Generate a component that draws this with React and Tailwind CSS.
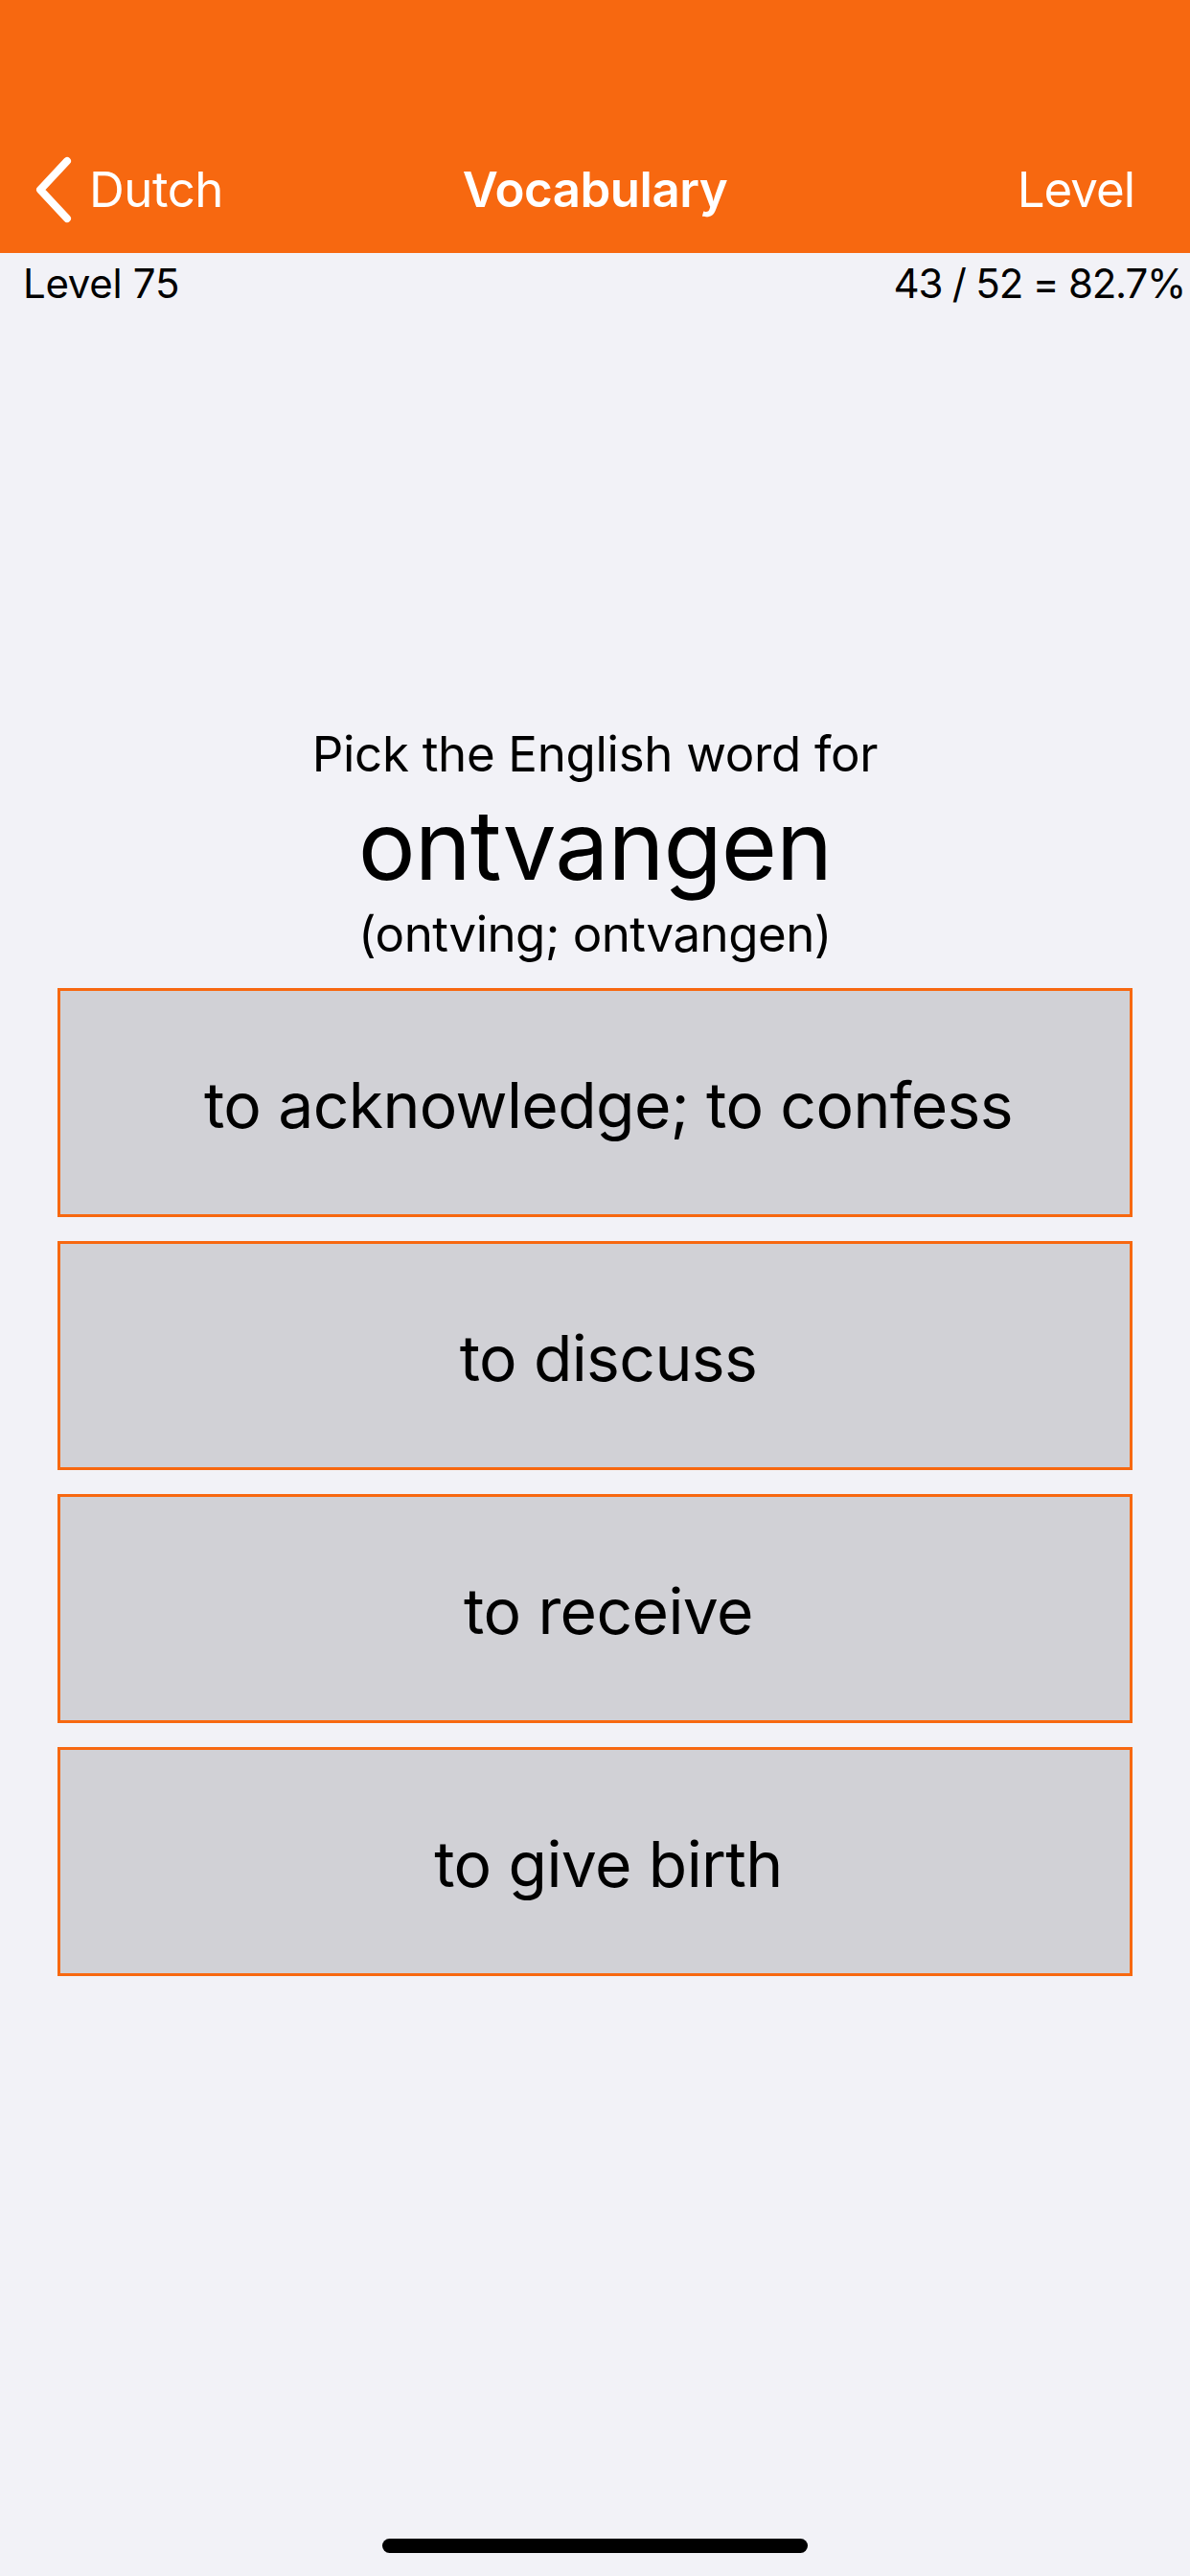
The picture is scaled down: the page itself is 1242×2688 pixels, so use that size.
const choices = [
  'to acknowledge; to confess',
  'to discuss',
  'to receive',
  'to give birth',
]

function Chevron() {
  return (
    <svg width="44" height="70" viewBox="0 0 44 70" fill="none">
      <path d="M36 5 L8 35 L36 65" stroke="white" strokeWidth="8" strokeLinecap="round" strokeLinejoin="round" />
    </svg>
  )
}

export default function App() {
  return (
    <div className="min-h-[2688px] w-[1242px] bg-[#f2f2f7] flex flex-col font-['Inter',sans-serif] text-black">
      <header className="bg-[#f76810] h-[264px] pt-[132px] text-white">
        <div className="h-[132px] grid grid-cols-3 items-center">
          <div className="flex items-center pl-[34px]">
            <Chevron />
            <span className="text-[51px] ml-[15px] tracking-[-0.5px]">Dutch</span>
          </div>
          <div className="text-center text-[51px] font-semibold tracking-[-0.5px]">Vocabulary</div>
          <div className="text-right text-[51px] pr-[58px] tracking-[-1px]">Level</div>
        </div>
      </header>

      <div className="h-[62px] flex items-center justify-between pl-[24px] pr-[5px] text-[42px] tracking-[-0.3px]">
        <span>Level 75</span>
        <span className="tracking-[-1.2px]">43 / 52 = 82.7%</span>
      </div>

      <div className="mt-[431px] flex flex-col items-center text-center">
        <div className="text-[51px] leading-[60px] tracking-[-0.3px]">Pick the English word for</div>
        <div className="text-[100px] leading-[130px] tracking-[-1px]">ontvangen</div>
        <div className="text-[51px] leading-[56px] tracking-[-0.5px]">(ontving; ontvangen)</div>
      </div>

      <div className="mt-[28px] mx-[60px] flex flex-col gap-[25px]">
        {choices.map(c => (
          <button
            key={c}
            className="h-[239px] w-full border-[3px] border-[#f76810] bg-[#d1d1d6] flex items-center justify-center pl-[28px] pt-[6px] text-[66px] tracking-[-0.6px]"
          >
            {c}
          </button>
        ))}
      </div>

      <div className="mt-auto mb-[24px] mx-auto w-[444px] h-[15px] rounded-full bg-black" />
    </div>
  )
}
